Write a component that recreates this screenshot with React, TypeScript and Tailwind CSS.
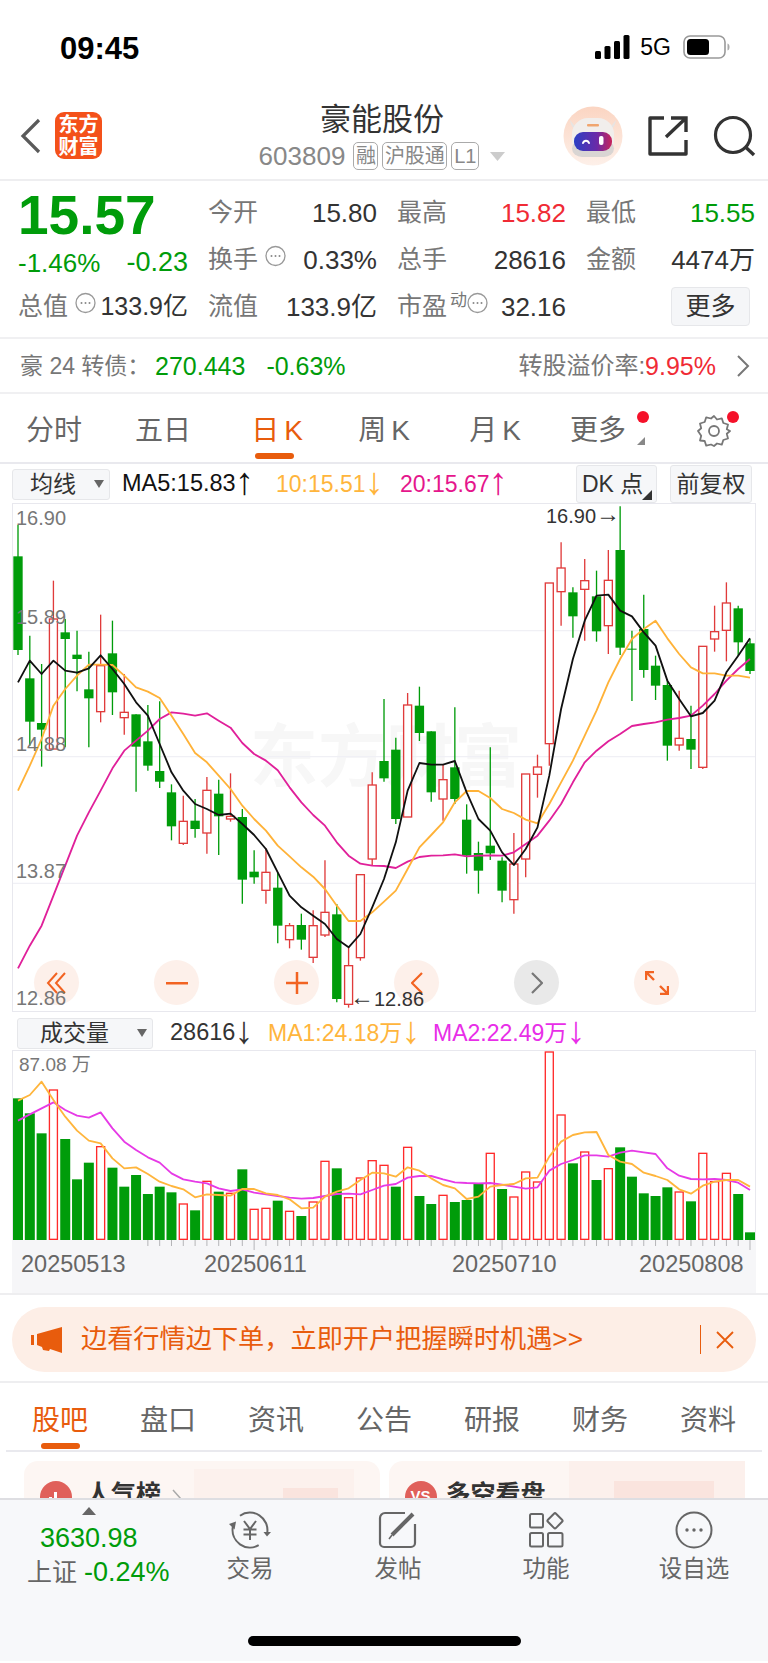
const green = "#009c0a";
const red = "#e03b3b";

// candles in 3x chart coordinates: [bodyTop, bodyBottom, high, low, isUp]
const candles: [number, number, number, number, number][] = [
	[172, 453, 78, 468, 0], [538, 668, 410, 740, 0], [672, 692, 495, 803, 0], [360, 750, 245, 750, 1],
	[400, 420, 360, 745, 0], [467, 480, 395, 577, 0], [571, 598, 458, 745, 0], [500, 638, 347, 670, 1],
	[463, 580, 365, 648, 0], [640, 656, 525, 707, 1], [646, 743, 646, 878, 0], [727, 800, 618, 815, 0],
	[816, 848, 607, 867, 0], [880, 982, 856, 1024, 0], [967, 1033, 890, 1038, 1], [965, 990, 900, 1016, 0],
	[874, 1002, 834, 1064, 1], [884, 952, 842, 1068, 0], [952, 960, 823, 968, 1], [954, 1142, 930, 1214, 0],
	[1118, 1135, 1054, 1154, 0], [1120, 1174, 1048, 1214, 1], [1166, 1280, 1120, 1333, 0], [1280, 1322, 1272, 1348, 1],
	[1278, 1322, 1244, 1352, 0], [1280, 1375, 1234, 1392, 1], [1240, 1308, 1084, 1314, 1], [1246, 1500, 1215, 1510, 0],
	[1400, 1516, 1345, 1526, 1], [1127, 1376, 1127, 1385, 1], [858, 1080, 820, 1100, 1], [786, 838, 600, 848, 0],
	[752, 960, 716, 975, 0], [618, 954, 582, 954, 1], [620, 702, 563, 726, 0], [697, 880, 697, 908, 0],
	[842, 900, 795, 965, 1], [805, 900, 625, 915, 0], [962, 1070, 916, 1124, 0], [1062, 1115, 1028, 1184, 0],
	[1040, 1063, 745, 1083, 0], [1085, 1175, 1075, 1210, 0], [1095, 1202, 1002, 1244, 1], [825, 1080, 825, 1135, 1],
	[804, 826, 767, 896, 1], [252, 734, 252, 800, 1], [207, 278, 130, 380, 1], [280, 352, 265, 416, 0],
	[245, 271, 180, 425, 1], [292, 397, 215, 428, 0], [244, 380, 153, 465, 1], [153, 446, 22, 468, 0],
	[449, 452, 395, 606, 0], [390, 513, 287, 536, 0], [500, 560, 470, 603, 0], [558, 740, 540, 785, 0],
	[718, 738, 575, 755, 1], [720, 752, 620, 810, 0], [442, 805, 442, 810, 1], [398, 420, 320, 458, 1],
	[312, 394, 250, 487, 1], [328, 430, 320, 470, 0], [433, 516, 420, 525, 0],
];

const ma5 = [550, 485, 525, 485, 515, 521, 508, 469, 510, 555, 610, 650, 735, 820, 875, 915, 930, 948, 944, 975, 1008, 1050, 1120, 1190, 1225, 1250, 1275, 1320, 1345, 1305, 1225, 1140, 1030, 875, 792, 797, 797, 786, 880, 960, 995, 1060, 1098, 1050, 985, 830, 630, 480, 365, 290, 287, 335, 352, 400, 440, 545, 600, 652, 642, 605, 520, 470, 418];
const ma10 = [875, 800, 720, 620, 570, 530, 497, 497, 498, 530, 565, 578, 597, 650, 705, 762, 790, 830, 870, 920, 960, 995, 1040, 1072, 1105, 1133, 1170, 1220, 1266, 1266, 1240, 1208, 1175, 1110, 1045, 1008, 970, 910, 876, 876, 897, 930, 942, 962, 973, 915, 850, 785, 710, 635, 550, 480, 420, 390, 365, 418, 465, 505, 523, 523, 530, 530, 536];
const ma20 = [1408, 1340, 1280, 1190, 1100, 1010, 940, 875, 808, 755, 725, 695, 660, 640, 644, 650, 643, 665, 686, 732, 765, 785, 814, 865, 910, 948, 980, 1030, 1070, 1094, 1100, 1101, 1107, 1088, 1074, 1070, 1069, 1066, 1072, 1070, 1069, 1070, 1060, 1035, 1010, 965, 915, 850, 790, 755, 727, 705, 681, 675, 670, 662, 657, 650, 620, 585, 545, 510, 480];

// volume bars: [top, isUp]
const volumes: [number, number][] = [
	[265, 0], [310, 0], [370, 0], [240, 1], [387, 0], [508, 0], [458, 0], [410, 1], [473, 0], [530, 0], [495, 0],
	[552, 0], [530, 0], [547, 0], [582, 1], [601, 0], [514, 1], [545, 0], [550, 1], [478, 0], [598, 1], [595, 1],
	[572, 0], [604, 1], [618, 0], [576, 1], [454, 1], [475, 0], [563, 1], [504, 1], [452, 1], [466, 1], [530, 0],
	[412, 1], [558, 0], [582, 0], [556, 1], [576, 0], [570, 0], [522, 0], [430, 1], [537, 0], [561, 1], [486, 1],
	[516, 1], [126, 1], [315, 1], [460, 0], [426, 1], [510, 0], [476, 1], [412, 0], [500, 0], [550, 0], [558, 0],
	[532, 0], [546, 1], [574, 0], [430, 1], [515, 1], [490, 1], [552, 0], [667, 0],
];
const vma1 = [272, 255, 215, 270, 320, 362, 392, 400, 445, 475, 472, 492, 515, 528, 538, 562, 553, 555, 557, 537, 537, 550, 555, 568, 595, 593, 560, 545, 535, 510, 488, 490, 500, 472, 482, 505, 525, 535, 567, 560, 530, 525, 522, 505, 503, 440, 395, 375, 367, 366, 435, 455, 462, 488, 498, 510, 538, 551, 527, 515, 510, 510, 530];
const vma2 = [332, 313, 295, 277, 300, 317, 323, 307, 355, 395, 420, 442, 458, 490, 508, 515, 520, 535, 543, 538, 548, 553, 558, 563, 566, 564, 558, 552, 551, 553, 540, 527, 522, 503, 498, 498, 508, 517, 519, 520, 519, 524, 530, 536, 532, 482, 462, 450, 436, 436, 440, 428, 422, 427, 432, 475, 497, 507, 508, 507, 510, 518, 540];

const xAt = (i: number) => 54 + 35.42 * i;
const toPoints = (ys: number[]) => ys.map((y, i) => `${xAt(i).toFixed(1)},${y}`).join(" ");

function InfoDot() {
	return (
		<svg width="21" height="22" viewBox="0 0 21 22" className="shrink-0">
			<ellipse cx="10.5" cy="11" rx="9.5" ry="9.5" fill="none" stroke="#999" strokeWidth="1.3" />
			<circle cx="6.5" cy="11" r="1" fill="#888" />
			<circle cx="10.5" cy="11" r="1" fill="#888" />
			<circle cx="14.5" cy="11" r="1" fill="#888" />
		</svg>
	);
}

function Arrow({ char }: { char: string }) {
	return <span className="ml-[2px] inline-flex w-[13px] -translate-y-[3px] justify-center text-[38px] leading-[24px]">{char}</span>;
}

function StatusBar() {
	return (
		<div className="flex h-[95px] items-start justify-between pl-[60px] pr-[38px] pt-[32px]">
			<span className="text-[31px] font-bold leading-[34px] text-black">09:45</span>
			<div className="flex items-center pt-[3px]">
				<svg width="35" height="24" viewBox="0 0 35 24" className="mr-[10px]">
					<rect x="0" y="16" width="6" height="8" rx="1.5" fill="#000" />
					<rect x="9.5" y="11" width="6" height="13" rx="1.5" fill="#000" />
					<rect x="19" y="6" width="6" height="18" rx="1.5" fill="#000" />
					<rect x="28.5" y="0" width="6" height="24" rx="1.5" fill="#000" />
				</svg>
				<span className="mr-[12px] text-[23px] leading-none text-black">5G</span>
				<svg width="47" height="24" viewBox="0 0 47 24">
					<rect x="1" y="1" width="41" height="22" rx="6" fill="none" stroke="#999" strokeWidth="1.6" />
					<rect x="4" y="4" width="22" height="16" rx="3.5" fill="#000" />
					<path d="M44.5 8.5c1.6.5 2 2 2 3.5s-.4 3-2 3.5z" fill="#aaa" />
				</svg>
			</div>
		</div>
	);
}

function RobotAvatar() {
	return (
		<svg width="60" height="60" viewBox="0 0 60 60">
			<defs>
				<linearGradient id="peach" x1="0" y1="0" x2="0" y2="1">
					<stop offset="0" stopColor="#fbd5c2" />
					<stop offset="1" stopColor="#fdf0e9" />
				</linearGradient>
				<linearGradient id="visor" x1="0" y1="0" x2="1" y2="0">
					<stop offset="0" stopColor="#2c3fc4" />
					<stop offset="0.6" stopColor="#6a2aa8" />
					<stop offset="1" stopColor="#c8245a" />
				</linearGradient>
			</defs>
			<circle cx="30" cy="30" r="29.5" fill="url(#peach)" />
			<path d="M7 14c1 6 3 9 8 10zM53 14c-1 6-3 9-8 10z" fill="#e8e4e2" />
			<rect x="9" y="12" width="42" height="38" rx="16" fill="#f1eeec" />
			<rect x="9" y="34" width="42" height="17" rx="10" fill="#d9d5d3" />
			<rect x="24" y="18" width="12" height="2.5" rx="1" fill="#f0a56f" />
			<rect x="11" y="26" width="38" height="19" rx="9" fill="url(#visor)" />
			<path d="M20 37c1-3 5-3 6 0" fill="none" stroke="#fff" strokeWidth="2" strokeLinecap="round" />
			<rect x="36" y="30" width="4.5" height="9" rx="2" fill="#fff" />
		</svg>
	);
}

function Header() {
	return (
		<div className="flex h-[86px] items-start border-b-2 border-[#eeeef0]">
			<svg width="22" height="36" viewBox="0 0 22 36" className="ml-[20px] mt-[23px]">
				<path d="M19 2 3 18l16 16" fill="none" stroke="#5a5a5a" strokeWidth="3.2" />
			</svg>
			<div className="ml-[13px] mt-[17px] flex h-[47px] w-[47px] flex-col items-center justify-center rounded-[9px] bg-[#f4511a] text-[20px] font-bold leading-[22px] text-white">
				<span>东方</span>
				<span>财富</span>
			</div>
			<div className="ml-[156px] flex w-[248px] flex-col items-center pt-[9px]">
				<span className="text-[31px] leading-[32px] text-[#333]">豪能股份</span>
				<div className="mt-[6px] flex items-center text-[#888]">
					<span className="text-[26px] leading-[28px]">603809</span>
					<span className="ml-[8px] flex h-[28px] w-[25px] items-center justify-center rounded-[5px] border border-[#aaa] text-[20px]">融</span>
					<span className="ml-[4px] flex h-[28px] w-[65px] items-center justify-center rounded-[5px] border border-[#aaa] text-[20px]">沪股通</span>
					<span className="ml-[4px] flex h-[28px] w-[28px] items-center justify-center rounded-[5px] border border-[#aaa] text-[20px]">L1</span>
					<svg width="15" height="9" viewBox="0 0 15 9" className="ml-[11px]">
						<path d="M0 0h15L7.500 9z" fill="#ccc" />
					</svg>
				</div>
			</div>
			<div className="ml-[57px] mt-[11px]">
				<RobotAvatar />
			</div>
			<svg width="40" height="40" viewBox="0 0 40 40" className="ml-[25px] mt-[21px]">
				<path d="M16 2H2v36h36V24" fill="none" stroke="#333" strokeWidth="3.4" strokeLinejoin="round" />
				<path d="M18 21 38 2M23 2h15v14" fill="none" stroke="#333" strokeWidth="3.4" />
			</svg>
			<svg width="44" height="44" viewBox="0 0 44 44" className="ml-[24px] mt-[19px]">
				<circle cx="21" cy="21" r="17.500" fill="none" stroke="#333" strokeWidth="3.2" />
				<path d="M34 33.500 42 41" stroke="#333" strokeWidth="3.4" />
			</svg>
		</div>
	);
}

function QuoteCell({ label, value, color = "text-[#333]", extra }: { label: string; value: string; color?: string; extra?: React.ReactNode }) {
	return (
		<div className="flex h-[47px] w-[169px] items-center justify-between">
			<div className="flex items-center">
				<span className="text-[25px] leading-none text-[#777]">{label}</span>
				{extra}
			</div>
			<span className={`text-[26px] leading-none ${color}`}>{value}</span>
		</div>
	);
}

function Quote() {
	return (
		<div className="flex h-[158px] border-b-2 border-[#f0f0f2] pt-[8px]">
			<div className="w-[208px] pl-[18px]">
				<div className="flex h-[47px] items-center pt-[5px] text-[55px] font-bold leading-none text-[#009c0a]">15.57</div>
				<div className="flex h-[47px] w-[170px] items-center justify-between pt-[6px] leading-none text-[#009c0a]">
					<span className="text-[26px]">-1.46%</span>
					<span className="text-[27px]">-0.23</span>
				</div>
				<div className="flex h-[47px] w-[170px] items-center">
					<span className="text-[25px] leading-none text-[#777]">总值</span>
					<span className="mb-[8px] ml-[7px]"><InfoDot /></span>
					<span className="ml-auto text-[25px] leading-none text-[#333]">133.9亿</span>
				</div>
			</div>
			<div className="grid grid-cols-[169px_169px_169px] content-start gap-x-[20px]">
				<QuoteCell label="今开" value="15.80" />
				<QuoteCell label="最高" value="15.82" color="text-[#f02b35]" />
				<QuoteCell label="最低" value="15.55" color="text-[#009c0a]" />
				<QuoteCell label="换手" value="0.33%" extra={<span className="mb-[8px] ml-[7px]"><InfoDot /></span>} />
				<QuoteCell label="总手" value="28616" />
				<QuoteCell label="金额" value="4474万" />
				<QuoteCell label="流值" value="133.9亿" />
				<QuoteCell
					label="市盈"
					value="32.16"
					extra={
						<span className="mb-[8px] flex items-start">
							<span className="ml-[3px] text-[17px] leading-none text-[#777]">动</span>
							<InfoDot />
						</span>
					}
				/>
				<div className="flex h-[47px] w-[164px] items-center justify-end">
					<span className="flex h-[39px] w-[79px] items-center justify-center rounded-[4px] border border-[#e6e7ea] bg-[#f5f6f8] text-[25px] leading-none text-[#333]">更多</span>
				</div>
			</div>
		</div>
	);
}

function BondRow() {
	return (
		<div className="flex h-[55px] items-center justify-between border-b-2 border-[#f0f0f2] pl-[20px] pr-[18px] pt-[1px]">
			<div className="flex items-center leading-none">
				<span className="w-[135px] text-[23px] text-[#777]">豪 24 转债：</span>
				<span className="text-[25px] text-[#009c0a]">270.443</span>
				<span className="ml-[21px] text-[25px] text-[#009c0a]">-0.63%</span>
			</div>
			<div className="flex items-center leading-none">
				<span className="text-[24px] text-[#777]">转股溢价率:</span>
				<span className="text-[25px] text-[#f02b35]">9.95%</span>
				<svg width="14" height="24" viewBox="0 0 14 24" className="ml-[20px]">
					<path d="m2 2 10 10L2 22" fill="none" stroke="#777" strokeWidth="2" />
				</svg>
			</div>
		</div>
	);
}

function PeriodTabs() {
	return (
		<div className="grid h-[70px] grid-cols-[108px_110px_118px_96px_126px_80px_130px] border-b-2 border-[#e9e9ee] pt-[5px] text-[28px] leading-none text-[#666]">
			<div className="flex items-center justify-center">分时</div>
			<div className="flex items-center justify-center">五日</div>
			<div className="relative flex items-center justify-center text-[#e85c0d]">
				<span>日<span className="ml-[5px]">K</span></span>
				<span className="absolute bottom-[3px] left-[37px] h-[6px] w-[39px] rounded-full bg-[#e85c0d]" />
			</div>
			<div className="flex items-center justify-center"><span>周<span className="ml-[5px]">K</span></span></div>
			<div className="flex items-center justify-center"><span>月<span className="ml-[5px]">K</span></span></div>
			<div className="relative flex items-center justify-center">
				更多
				<span className="absolute right-[-11px] top-[12px] h-[12px] w-[12px] rounded-full bg-[#f5112a]" />
				<svg width="8" height="8" viewBox="0 0 8 8" className="absolute right-[-7px] top-[38px]">
					<path d="M8 0v8H0z" fill="#888" />
				</svg>
			</div>
			<div className="relative flex items-center pl-[59px]">
				<svg width="34" height="34" viewBox="0 0 34 34">
					<path d="M17 2l3 3.500 4.800-1.200 1.500 4.700 4.700 1.500-1.200 4.800L33 17l-3.200 2.700 1.200 4.800-4.700 1.500-1.500 4.700-4.800-1.200L17 32l-3-1.500-4.800 1.200-1.500-4.700L3 26.500l1.200-4.800L1 17l3.200-2.700L3 9.500 7.700 8l1.500-4.700L14 4.500z" fill="none" stroke="#777" strokeWidth="1.800" strokeLinejoin="round" />
					<circle cx="17" cy="17" r="5" fill="none" stroke="#777" strokeWidth="1.800" />
				</svg>
				<span className="absolute left-[89px] top-[12px] h-[12px] w-[12px] rounded-full bg-[#f5112a]" />
			</div>
		</div>
	);
}

function SelectBox({ label, width, pad }: { label: string; width: string; pad: string }) {
	return (
		<div className={`flex h-[31px] items-center justify-between rounded-[3px] border border-[#e6e7ea] bg-[#f6f7f9] pr-[5px] ${pad} ${width}`}>
			<span className="text-[23px] leading-none text-[#333]">{label}</span>
			<svg width="10" height="8" viewBox="0 0 10 8">
				<path d="M0 0h10L5 8z" fill="#666" />
			</svg>
		</div>
	);
}

function MaRow() {
	return (
		<div className="flex h-[39px] items-center pl-[12px] pt-[1px]">
			<SelectBox label="均线" width="w-[98px]" pad="pl-[17px]" />
			<div className="ml-[12px] flex w-[154px] items-center whitespace-nowrap text-[23.500px] leading-none text-[#111]">MA5:15.83<Arrow char="↑" /></div>
			<div className="flex w-[124px] items-center whitespace-nowrap text-[23px] leading-none text-[#ffb53c]">10:15.51<Arrow char="↓" /></div>
			<div className="flex w-[176px] items-center whitespace-nowrap text-[23px] leading-none text-[#e5168c]">20:15.67<Arrow char="↑" /></div>
			<div className="relative flex h-[38px] w-[81px] items-center rounded-[3px] border border-[#e6e7ea] bg-[#f6f7f9] pl-[5px] text-[23px] leading-none text-[#333]">
				DK 点
				<svg width="10" height="10" viewBox="0 0 10 10" className="absolute bottom-[2px] right-[4px]">
					<path d="M10 0v10H0z" fill="#333" />
				</svg>
			</div>
			<div className="ml-[13px] flex h-[38px] w-[82px] items-center justify-center rounded-[3px] border border-[#e6e7ea] bg-[#f6f7f9] text-[23px] leading-none text-[#333]">前复权</div>
		</div>
	);
}

function ChartButton({ left, gray, children }: { left: string; gray?: boolean; children: React.ReactNode }) {
	return (
		<div className={`absolute top-[456px] flex h-[45px] w-[45px] items-center justify-center rounded-full ${gray ? "bg-[#e9e9e9]" : "bg-[#fdf0ea]"} ${left}`}>
			{children}
		</div>
	);
}

function PriceChart() {
	return (
		<div className="relative ml-[12px] h-[509px] w-[744px] border border-[#e8e8ee]">
			<span className="absolute left-[237px] top-[219px] whitespace-nowrap text-[68px] font-bold leading-none text-[#f7f7f7]">东方财富</span>
			<svg width="742" height="507" viewBox="39 15 2226 1521" className="relative block">
				{[395, 773, 1153].map((y) => (
					<line key={y} x1="36" x2="2268" y1={y} y2={y} stroke="#f0f0f5" strokeWidth="4" />
				))}
				{candles.map(([top, bottom, high, low, up], i) => {
					const x = xAt(i);
					const color = up ? red : green;
					return (
						<g key={i}>
							<line x1={x} x2={x} y1={high} y2={up ? top : low} stroke={color} strokeWidth="4" />
							{up ? <line x1={x} x2={x} y1={bottom} y2={low} stroke={color} strokeWidth="4" /> : null}
							{up ? (
								<rect x={x - 12} y={top} width="24" height={bottom - top} fill="#fff" stroke={color} strokeWidth="4" />
							) : (
								<rect x={x - 14} y={top} width="28" height={bottom - top} fill={color} />
							)}
						</g>
					);
				})}
				<polyline points={toPoints(ma20)} fill="none" stroke="#e0209a" strokeWidth="5.500" strokeLinejoin="round" />
				<polyline points={toPoints(ma10)} fill="none" stroke="#ffb238" strokeWidth="5.500" strokeLinejoin="round" />
				<polyline points={toPoints(ma5)} fill="none" stroke="#111" strokeWidth="5.500" strokeLinejoin="round" />
			</svg>
			<ChartButton left="left-[21px]">
				<svg width="22" height="24" viewBox="0 0 22 24">
					<path d="M11 2 2 12l9 10M19 2l-9 10 9 10" fill="none" stroke="#f26322" strokeWidth="2" />
				</svg>
			</ChartButton>
			<ChartButton left="left-[141px]">
				<svg width="22" height="4" viewBox="0 0 22 4">
					<rect width="22" height="2.500" y="1" fill="#f26322" />
				</svg>
			</ChartButton>
			<ChartButton left="left-[261px]">
				<svg width="22" height="22" viewBox="0 0 22 22">
					<path d="M0 11h22M11 0v22" stroke="#f26322" strokeWidth="2.500" />
				</svg>
			</ChartButton>
			<ChartButton left="left-[381px]">
				<svg width="12" height="22" viewBox="0 0 12 22">
					<path d="M11 1 1 11l10 10" fill="none" stroke="#f26322" strokeWidth="2.200" />
				</svg>
			</ChartButton>
			<ChartButton left="left-[501px]" gray>
				<svg width="12" height="22" viewBox="0 0 12 22">
					<path d="m1 1 10 10L1 21" fill="none" stroke="#777" strokeWidth="2.200" />
				</svg>
			</ChartButton>
			<ChartButton left="left-[621px]">
				<svg width="24" height="24" viewBox="0 0 24 24">
					<path d="M1 9V1h8M1 1l8 8M23 15v8h-8M23 23l-8-8" fill="none" stroke="#f26322" strokeWidth="2.400" />
				</svg>
			</ChartButton>
			<span className="absolute left-[3px] top-[4px] text-[20px] leading-[20px] text-[#777]">16.90</span>
			<span className="absolute left-[3px] top-[103px] text-[20px] leading-[20px] text-[#777]">15.89</span>
			<span className="absolute left-[3px] top-[230px] text-[20px] leading-[20px] text-[#777]">14.88</span>
			<span className="absolute left-[3px] top-[357px] text-[20px] leading-[20px] text-[#777]">13.87</span>
			<span className="absolute left-[3px] top-[484px] text-[20px] leading-[20px] text-[#777]">12.86</span>
			<span className="absolute left-[533px] top-[2px] flex items-center whitespace-nowrap text-[20px] leading-[20px] text-[#333]">
				16.90<span className="-translate-y-[2px] text-[24px] font-bold leading-[20px]">→</span>
			</span>
			<span className="absolute left-[337px] top-[485px] flex items-center whitespace-nowrap text-[20px] leading-[20px] text-[#333]">
				<span className="-translate-y-[2px] text-[24px] font-bold leading-[20px]">←</span>12.86
			</span>
		</div>
	);
}

function VolumeRow() {
	return (
		<div className="flex h-[38px] items-center pl-[17px] pt-[4px]">
			<SelectBox label="成交量" width="w-[136px]" pad="pl-[22px]" />
			<div className="ml-[17px] flex w-[98px] items-center whitespace-nowrap text-[23.500px] leading-none text-[#333]">28616<Arrow char="↓" /></div>
			<div className="flex w-[165px] items-center whitespace-nowrap text-[23px] leading-none text-[#ffb53c]">MA1:24.18万<Arrow char="↓" /></div>
			<div className="flex items-center whitespace-nowrap text-[23px] leading-none text-[#e82ee8]">MA2:22.49万<Arrow char="↓" /></div>
		</div>
	);
}

function VolumeChart() {
	return (
		<div className="relative ml-[12px] h-[190px] w-[744px] border-x border-t border-[#e8e8ee]">
			<svg width="742" height="189" viewBox="39 123 2226 567" className="block">
				{volumes.map(([top, up], i) => {
					const x = xAt(i);
					return up ? (
						<rect key={i} x={x - 12} y={top} width="24" height={688 - top} fill="#fff" stroke="#ff2a2a" strokeWidth="4" />
					) : (
						<rect key={i} x={x - 15} y={top} width="30" height={690 - top} fill="#009c0a" />
					);
				})}
				<polyline points={toPoints(vma2)} fill="none" stroke="#e63ae6" strokeWidth="5.500" strokeLinejoin="round" />
				<polyline points={toPoints(vma1)} fill="none" stroke="#ffb53c" strokeWidth="5.500" strokeLinejoin="round" />
			</svg>
			<span className="absolute left-[6px] top-[4px] whitespace-nowrap text-[19px] leading-[20px] text-[#777]">87.08 万</span>
		</div>
	);
}

function DateAxis() {
	return (
		<div className="mx-[12px] h-[53px] bg-[#f6f6f8]">
			<svg width="744" height="11" viewBox="36 0 2232 33" className="block">
				{volumes.map((_, i) =>
					i < 11 ? null : (
						<line key={i} x1={xAt(i)} x2={xAt(i)} y1="0" y2={i === 20 || i === 41 || i === 62 ? 30 : 18} stroke="#b5b5b8" strokeWidth="3" />
					),
				)}
			</svg>
			<div className="grid grid-cols-[183px_248px_187px_auto] pl-[9px] pt-[2px] text-[23.500px] leading-none text-[#666]">
				<span>20250513</span>
				<span>20250611</span>
				<span>20250710</span>
				<span>20250808</span>
			</div>
		</div>
	);
}

function Banner() {
	return (
		<div className="h-[90px] border-y-2 border-[#eeeef0] px-[12px] pt-[12px]">
			<div className="flex h-[65px] items-center rounded-full bg-[#fdeee6] pl-[19px] text-[#e85c0d]">
				<svg width="32" height="26" viewBox="0 0 32 26">
					<rect x="0" y="8" width="3" height="10" fill="#e85c0d" />
					<path d="M6 7 31 0v26l-12-4-1 2-6-1-1-3-5-2z" fill="#e85c0d" />
				</svg>
				<span className="ml-[18px] w-[619px] whitespace-nowrap text-[26.200px] leading-none">边看行情边下单，立即开户把握瞬时机遇&gt;&gt;</span>
				<span className="h-[29px] w-px bg-[#e85c0d]" />
				<svg width="18" height="18" viewBox="0 0 18 18" className="ml-[15px]">
					<path d="m1 1 16 16M17 1 1 17" stroke="#e85c0d" strokeWidth="1.800" />
				</svg>
			</div>
		</div>
	);
}

function NewsTabs() {
	const items = ["股吧", "盘口", "资讯", "公告", "研报", "财务", "资料"];
	return (
		<div className="relative mx-[6px] grid h-[69px] grid-cols-7 border-b-2 border-[#e9e9ee] pt-[8px] text-[28px] leading-none text-[#666]">
			{items.map((t, i) => (
				<div key={t} className={`flex items-center justify-center ${i === 0 ? "text-[#e85c0d]" : ""}`}>{t}</div>
			))}
			<span className="absolute bottom-[1px] left-[35px] h-[6px] w-[39px] rounded-full bg-[#e85c0d]" />
		</div>
	);
}

function Cards() {
	return (
		<div className="flex h-[46px] gap-[9px] overflow-hidden px-[24px] pt-[9px]">
			<div className="relative flex h-[60px] w-[356px] items-start rounded-t-[14px] bg-[#fdf6f3] pl-[16px] pt-[20px]">
				<span className="absolute left-[170px] top-[8px] h-[40px] w-[160px] bg-[#fcf1ed]" />
				<span className="absolute left-[259px] top-[27px] h-[20px] w-[55px] bg-[#fae4de]" />
				<span className="relative flex h-[32px] w-[32px] items-start justify-center rounded-full bg-[#e0605a] pt-[9px]">
					<svg width="16" height="12" viewBox="0 0 16 12"><path d="M1 7h3v5H1zM6 2h3v10H6zM11 8h3v4h-3z" fill="#fff" /></svg>
				</span>
				<span className="relative ml-[14px] mt-[1px] text-[25px] font-bold leading-none text-[#333]">人气榜</span>
				<svg width="10" height="20" viewBox="0 0 10 20" className="relative ml-[11px] mt-[8px]">
					<path d="m1 1 8 9-8 9" fill="none" stroke="#aaa" strokeWidth="1.500" />
				</svg>
			</div>
			<div className="relative flex h-[60px] w-[356px] items-start rounded-t-[14px] bg-[#fdf6f3] pl-[16px] pt-[20px]">
				<span className="absolute left-[180px] top-0 h-[40px] w-[176px] bg-[#fcf0ec]" />
				<span className="absolute left-[225px] top-[20px] h-[20px] w-[100px] bg-[#fae4de]" />
				<span className="relative flex h-[32px] w-[32px] items-start justify-center rounded-full bg-[#e0605a] pt-[7px] text-[15px] font-bold leading-none text-white">VS</span>
				<span className="relative ml-[9px] mt-[1px] text-[25px] font-bold leading-none text-[#333]">多空看盘</span>
			</div>
		</div>
	);
}

function NavItem({ label, children }: { label: string; children: React.ReactNode }) {
	return (
		<div className="flex w-[148px] flex-col items-center pt-[9px]">
			<div className="flex h-[42px] items-center justify-center">{children}</div>
			<span className="mt-[6px] text-[23.500px] leading-[24px] text-[#666]">{label}</span>
		</div>
	);
}

function BottomBar() {
	return (
		<div className="h-[163px] border-t-2 border-[#dedee2] bg-[#f7f8fa]">
			<div className="flex h-[136px]">
				<div className="flex w-[176px] flex-col items-start pl-[27px] pt-[7px]">
					<svg width="14" height="8" viewBox="0 0 14 8" className="ml-[55px]">
						<path d="M7 0l7 8H0z" fill="#666" />
					</svg>
					<span className="ml-[13px] mt-[9px] text-[27px] leading-[28px] text-[#009c0a]">3630.98</span>
					<div className="mt-[7px] flex items-center whitespace-nowrap leading-none">
						<span className="text-[25px] text-[#666]">上证</span>
						<span className="ml-[7px] text-[27px] text-[#009c0a]">-0.24%</span>
					</div>
				</div>
				<NavItem label="交易">
					<svg width="46" height="42" viewBox="0 0 46 42" fill="none" stroke="#666" strokeWidth="2">
						<path d="M13 6.700A17.500 17.500 0 0 1 40.200 24" />
						<path d="M31.700 36.200A17.500 17.500 0 0 1 5.800 18" />
						<path d="M36.500 23 40 27.500 44 23z" fill="#666" stroke="none" />
						<path d="M2 15l7-2.500-1.500 8z" fill="#666" stroke="none" />
						<path d="M17 12l6 8 6-8M23 20v11M16.500 20.500h13M16.500 25.500h13" strokeWidth="2" />
					</svg>
				</NavItem>
				<NavItem label="发帖">
					<svg width="40" height="40" viewBox="0 0 40 40" fill="none" stroke="#666" strokeWidth="2.200">
						<path d="M27 3H7a5 5 0 0 0-5 5v25a4 4 0 0 0 4 4h27a4 4 0 0 0 4-4V14" />
						<path d="M14 25 35 4" strokeWidth="4" />
						<path d="M11 29l3-4" strokeWidth="1.500" />
					</svg>
				</NavItem>
				<NavItem label="功能">
					<svg width="36" height="36" viewBox="0 0 36 36" fill="none" stroke="#666" strokeWidth="2">
						<rect x="2" y="2" width="13" height="13.500" rx="1.500" />
						<rect x="21.300" y="3" width="11.500" height="11.500" rx="1.500" transform="rotate(45 27 8.700)" />
						<rect x="2" y="21" width="13" height="13.500" rx="1.500" />
						<rect x="20" y="21" width="14.500" height="13.500" rx="1.500" />
					</svg>
				</NavItem>
				<NavItem label="设自选">
					<svg width="38" height="38" viewBox="0 0 38 38">
						<circle cx="19" cy="19" r="17.500" fill="none" stroke="#666" strokeWidth="2" />
						<circle cx="12" cy="19" r="1.700" fill="#666" />
						<circle cx="19" cy="19" r="1.700" fill="#666" />
						<circle cx="26" cy="19" r="1.700" fill="#666" />
					</svg>
				</NavItem>
			</div>
			<div className="ml-[248px] h-[10px] w-[273px] rounded-full bg-black" />
		</div>
	);
}

export default function App() {
	return (
		<div className="h-[1663px] w-[768px] overflow-hidden bg-white font-['Liberation_Sans','Noto_Sans_CJK_SC',sans-serif]">
			<StatusBar />
			<Header />
			<Quote />
			<BondRow />
			<PeriodTabs />
			<MaRow />
			<PriceChart />
			<VolumeRow />
			<VolumeChart />
			<DateAxis />
			<Banner />
			<NewsTabs />
			<Cards />
			<BottomBar />
		</div>
	);
}
